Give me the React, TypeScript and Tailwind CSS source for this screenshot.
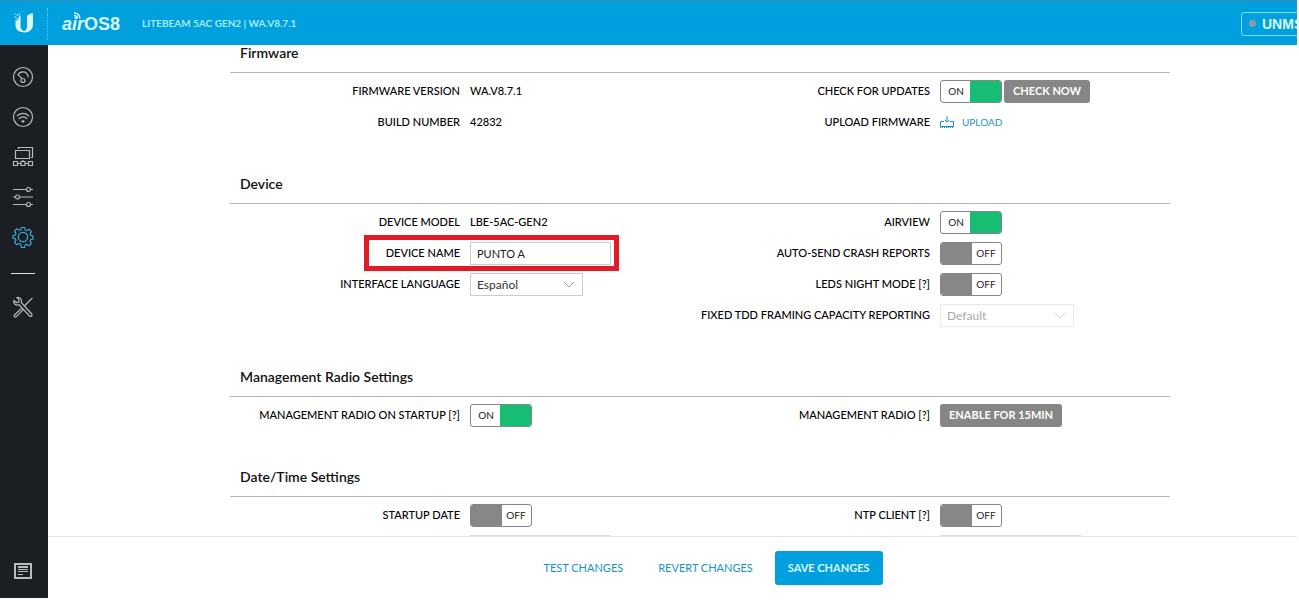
import React from 'react';

const LABEL = 'text-[11px] font-medium text-black';

const Toggle: React.FC<{ id: string; on?: boolean }> = ({ id, on = false }) => (
    <span className="relative flex h-[23px] w-[62px] overflow-hidden rounded-[3px] border border-[#868686] bg-white text-[10px] leading-[21px]">
        <input
            id={id}
            type="checkbox"
            defaultChecked={on}
            className="peer absolute inset-0 z-10 m-0 cursor-pointer opacity-0"
        />
        <span className="hidden w-[29px] pl-px text-center text-[#222] peer-checked:block">ON</span>
        <span className="-my-px -mr-px hidden flex-1 bg-[#16bd72] peer-checked:block" />
        <span className="w-[31px] bg-[#878787] peer-checked:hidden" />
        <span className="w-[28px] text-center text-[#222] peer-checked:hidden">OFF</span>
    </span>
);

interface SelectProps {
    id: string;
    options: string[];
    disabled?: boolean;
    className: string;
}

const Select: React.FC<SelectProps> = ({ id, options, disabled, className }) => (
    <span className={`relative block h-[23px] ${className}`}>
        <select
            id={id}
            disabled={disabled}
            className="block h-full w-full appearance-none border border-current/25 bg-white pl-[6px] text-[12px] disabled:opacity-100"
        >
            {options.map((option) => (
                <option key={option}>{option}</option>
            ))}
        </select>
        <svg className="pointer-events-none absolute top-2 right-2 h-2 w-3" viewBox="0 0 12 8" fill="none" stroke="currentColor" strokeOpacity="0.5">
            <path d="M1 1l5 5 5-5" />
        </svg>
    </span>
);

interface RowProps {
    label?: string;
    htmlFor?: string;
    highlight?: boolean;
    children: React.ReactNode;
}

const Row: React.FC<RowProps> = ({ label, htmlFor, highlight, children }) => (
    <div className="relative flex h-[31px] items-center gap-[10px]">
        {htmlFor ? (
            <label htmlFor={htmlFor} className={`w-[230px] shrink-0 text-right whitespace-nowrap ${LABEL}`}>
                {label}
            </label>
        ) : (
            <span className={`w-[230px] shrink-0 text-right whitespace-nowrap ${LABEL}`}>{label}</span>
        )}
        {children}
        {highlight && (
            <span className="pointer-events-none absolute -top-[3px] left-[134px] h-9 w-[255px] border-[5px] border-[#e21b26]" />
        )}
    </div>
);

const Section: React.FC<{ title: string; children: React.ReactNode }> = ({ title, children }) => (
    <section className="pt-[34px]">
        <h2 className="border-b border-[#b9b9b9] px-[10px] pb-[7px] text-[14px] leading-6 font-semibold text-[#111]">
            {title}
        </h2>
        <div className="grid grid-cols-2 pt-[3px]">{children}</div>
    </section>
);

const NavLink: React.FC<{ label: string; active?: boolean; children: React.ReactNode }> = ({ label, active, children }) => (
    <a href="#" aria-label={label} className={`flex h-10 items-center justify-center pr-[2px] ${active ? 'text-[#3aa9dc]' : 'text-[#b4bcc0]'}`}>
        <svg width="22" height="22" viewBox="0 0 22 22" fill="none" stroke="currentColor" strokeWidth="1.2">
            {children}
        </svg>
    </a>
);

const Sidebar: React.FC = () => (
    <nav className="flex w-12 shrink-0 flex-col bg-[#1b1e23] pt-3">
        <NavLink label="Dashboard">
            <circle cx="11" cy="11" r="9.5" />
            <circle cx="11" cy="14.5" r="2" />
            <path d="M10 12.7L6 8.7C8.500 4.500 14.500 5 16 9.500V11.500" />
        </NavLink>
        <NavLink label="Wireless">
            <circle cx="11" cy="11" r="9.5" />
            <path d="M4.800 10.200C8.200 6.400 13.800 6.400 17.200 10.200M6.800 12.800C9.200 10.200 12.800 10.200 15.200 12.800" />
            <path d="M9 15c1.200-1 2.800-1 4 0l-2 1.900z" fill="currentColor" stroke="none" />
        </NavLink>
        <NavLink label="Network">
            <path d="M3.500 4.500h14v8h-14zM6.500 3v-1.500h14v10h-1.500M11 14v2M5.500 17.500h3.500M13 17.500h3.500" />
            <path d="M1.500 15.500h4v4h-4zM9 15.500h4v4H9zM16.500 15.500h4v4h-4z" />
        </NavLink>
        <NavLink label="Services">
            <path d="M1 3.500h13.500M18.500 3.500H21M1 11h2.500M7.500 11H21M1 18.500h13.500M18.500 18.500H21" />
            <circle cx="16.500" cy="3.500" r="2" />
            <circle cx="5.500" cy="11" r="2" />
            <circle cx="16.500" cy="18.500" r="2" />
        </NavLink>
        <NavLink label="System" active>
            <circle cx="11" cy="11" r="4.700" />
            <path d="M9.300 1.500h3.400l.5 2.500 1.700.7 2.200-1.500 2.400 2.400-1.500 2.200.7 1.700 2.300.3v3.400l-2.300.3-.7 1.700 1.500 2.200-2.400 2.400-2.200-1.500-1.700.7-.5 2.500H9.300L8.800 18l-1.700-.7-2.200 1.500-2.400-2.400L4 14.200l-.7-1.700-2.300-.3V9.300L3.300 9 4 7.300 2.500 5.100l2.400-2.400 2.200 1.500L8.800 4z" strokeLinejoin="round" />
        </NavLink>
        <div className="mt-4 mb-[13px] ml-[11px] h-px w-6 bg-[#dfe3e5]" />
        <NavLink label="Tools">
            <path d="M13 9.500L18.700 3.500l1.800-1.500M9.500 12.500l-7 6.500a1.200 1.200 0 001.600 1.800l7-7" />
            <path d="M5 1.500L7 4v2L4.500 6.500 1.800 4.500C1 8 4 9.800 7 8.800L17.500 20c1.500 1.200 3.300-.5 2.200-2L9.500 6.700C10 3.500 8 1 5 1.500z" />
        </NavLink>
        <a href="#" aria-label="Device log" className="mt-auto mb-[19px] flex justify-center pr-[2px] text-[#b4bcc0]">
            <svg width="18" height="16" viewBox="0 0 18 16" fill="none" stroke="currentColor">
                <path d="M1 1h16v14H1z" strokeWidth="2" />
                <path d="M4 4h10" strokeWidth="2" />
                <path d="M4 6.500h10M4 8.500h10M4 11.500h5" />
            </svg>
        </a>
    </nav>
);

const Header: React.FC = () => (
    <header className="mr-[2px] flex h-[45px] shrink-0 items-center overflow-hidden border-t-2 border-[#1995c6] bg-[#009fde]">
        <a href="#" aria-label="Home" className="flex h-8 w-12 shrink-0 items-center justify-center border-r border-dotted border-[#6fd0f4]">
            <svg width="20" height="22" viewBox="0 0 20 22" fill="#d9f9ff">
                <path d="M6.500 2.500v10c0 3 1.500 5 4.500 6.300C5 19.800 1.500 17 1.500 12V6.500h1V8h1V5.500h1.500v-3z" />
                <path d="M13 3C14.500 1 16.500.3 19 .2V11c0 5.500-3.500 8.500-8.500 8.500-1.200 0-2-.2-3-.7 4-.3 5.500-2.300 5.500-6.300z" />
                <path d="M.5.5h1v1h-1zM2.500 1.500H4v1H2.500zM.5 3.500H2v1H.5zM4.500.5H6v1H4.500zM2.500 4.500h1v1h-1z" />
            </svg>
        </a>
        <div className="relative ml-[14px] flex w-[60px] shrink-0 items-baseline font-['Liberation_Sans',sans-serif] text-[18px] leading-none font-bold text-[#d9f9ff]">
            <span className="italic">air</span>
            <span>OS</span>
            <span>8</span>
            <svg className="absolute -top-[3px] left-[11px] h-2 w-2" viewBox="0 0 8 8" fill="none" stroke="#d9f9ff" strokeWidth="1.4">
                <path d="M1 1c3 0 5.500 2 6 5.500M1 3.500c2 0 3.300 1 3.500 3" />
            </svg>
        </div>
        <p className="ml-5 shrink-0 text-[10px] font-bold whitespace-nowrap text-[#a5ecff]">LITEBEAM 5AC GEN2 | WA.V8.7.1</p>
        <button
            type="button"
            className="-mr-6 ml-auto flex h-6 w-20 shrink-0 items-center gap-[6px] rounded-[3px] border border-[#7fdcf8] pl-[7px] font-['Liberation_Sans',sans-serif] text-[14px] leading-none font-bold text-[#d9f9ff]"
        >
            <span className="h-[7px] w-[7px] shrink-0 rounded-full bg-[#8c9ba3]" />
            UNMS
        </button>
    </header>
);

const Footer: React.FC = () => (
    <footer className="mr-[2px] flex h-[62px] shrink-0 items-center justify-center border-t border-[#e3e3e3] pt-px pl-[81px] text-[11px]">
        <button type="button" className="h-[34px] text-[#1a94c4]">TEST CHANGES</button>
        <button type="button" className="ml-[35px] h-[34px] text-[#1a94c4]">REVERT CHANGES</button>
        <button type="button" className="ml-[22px] h-[34px] rounded-[3px] bg-[#009fde] px-[13px] font-bold text-[#d9f9ff]">
            SAVE CHANGES
        </button>
    </footer>
);

const GREY_BUTTON = 'h-[23px] rounded-[3px] bg-[#868686] px-[9px] text-[11px] font-bold text-white';

const App: React.FC = () => (
    <div className="flex h-screen flex-col overflow-hidden bg-white pb-[2px] font-[Lato,sans-serif]">
        <Header />
        <div className="flex min-h-0 flex-1">
            <Sidebar />
            <div className="flex min-w-0 flex-1 flex-col">
                <main className="min-h-0 flex-1 overflow-hidden pl-[53px]">
                    {/* settings list, scrolled down to the firmware block */}
                    <div className="mx-auto -mt-[38px] max-w-[940px]">
                        <Section title="Firmware">
                            <div>
                                <Row label="FIRMWARE VERSION">
                                    <span className={LABEL}>WA.V8.7.1</span>
                                </Row>
                                <Row label="BUILD NUMBER">
                                    <span className={LABEL}>42832</span>
                                </Row>
                            </div>
                            <div>
                                <Row label="CHECK FOR UPDATES" htmlFor="updates">
                                    <span className="flex gap-[2px]">
                                        <Toggle id="updates" on />
                                        <button type="button" className={GREY_BUTTON}>CHECK NOW</button>
                                    </span>
                                </Row>
                                <Row label="UPLOAD FIRMWARE">
                                    <a href="#" className="flex items-center gap-2 text-[10px] text-[#1a94c4]">
                                        <svg width="14" height="14" viewBox="0 0 14 14" fill="none" stroke="currentColor">
                                            <path d="M4 5.500H.5v5h13v-5H10M7 0v6M4.800 4L7 6.200 9.200 4" />
                                            <path d="M0 11.500h14" strokeDasharray="1 1" />
                                        </svg>
                                        UPLOAD
                                    </a>
                                </Row>
                            </div>
                        </Section>

                        <Section title="Device">
                            <div>
                                <Row label="DEVICE MODEL">
                                    <span className={LABEL}>LBE-5AC-GEN2</span>
                                </Row>
                                <Row label="DEVICE NAME" htmlFor="name" highlight>
                                    <input
                                        id="name"
                                        type="text"
                                        defaultValue="PUNTO A"
                                        className="h-[23px] w-[141px] border border-[#ccc] px-[6px] text-[11px] text-[#222]"
                                    />
                                </Row>
                                <Row label="INTERFACE LANGUAGE" htmlFor="language">
                                    <Select id="language" options={['Español', 'English']} className="w-[113px] text-[#333]" />
                                </Row>
                            </div>
                            <div>
                                <Row label="AIRVIEW" htmlFor="airview">
                                    <Toggle id="airview" on />
                                </Row>
                                <Row label="AUTO-SEND CRASH REPORTS" htmlFor="crash">
                                    <Toggle id="crash" />
                                </Row>
                                <Row label="LEDS NIGHT MODE [?]" htmlFor="leds">
                                    <Toggle id="leds" />
                                </Row>
                                <Row label="FIXED TDD FRAMING CAPACITY REPORTING" htmlFor="framing">
                                    <Select id="framing" options={['Default']} disabled className="w-[134px] text-[#aaa]" />
                                </Row>
                            </div>
                        </Section>

                        <Section title="Management Radio Settings">
                            <Row label="MANAGEMENT RADIO ON STARTUP [?]" htmlFor="radio">
                                <Toggle id="radio" on />
                            </Row>
                            <Row label="MANAGEMENT RADIO [?]">
                                <button type="button" className={GREY_BUTTON}>ENABLE FOR 15MIN</button>
                            </Row>
                        </Section>

                        <Section title="Date/Time Settings">
                            <div>
                                <Row label="STARTUP DATE" htmlFor="startup">
                                    <Toggle id="startup" />
                                </Row>
                                <Row>
                                    <input type="text" disabled aria-label="Date" className="h-[23px] w-[141px] border border-[#ddd]" />
                                </Row>
                            </div>
                            <div>
                                <Row label="NTP CLIENT [?]" htmlFor="ntp">
                                    <Toggle id="ntp" />
                                </Row>
                                <Row>
                                    <input type="text" disabled aria-label="NTP server" className="h-[23px] w-[141px] border border-[#ddd]" />
                                </Row>
                            </div>
                        </Section>
                    </div>
                </main>
                <Footer />
            </div>
        </div>
    </div>
);

export default App;
